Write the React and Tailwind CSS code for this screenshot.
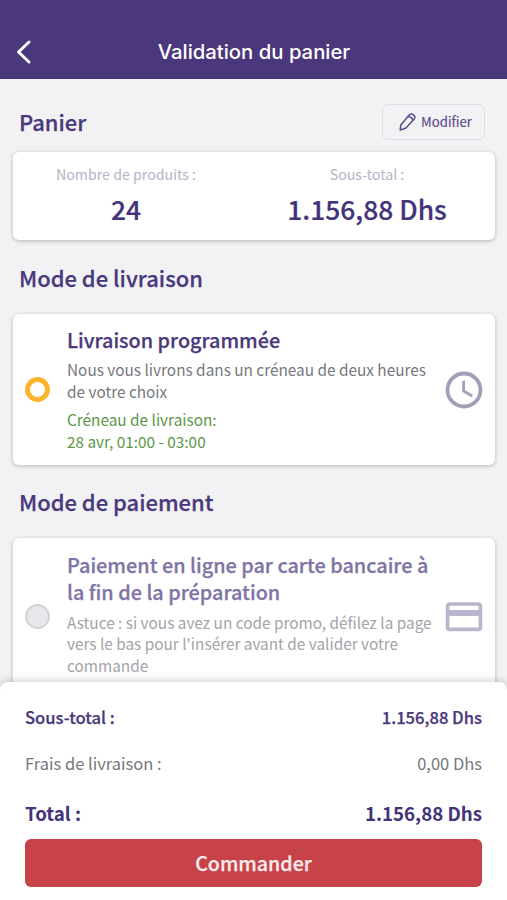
import clsx from 'clsx';

const ChevronIcon = () => (
  <svg width="18" height="26" viewBox="0 0 18 26" fill="none" stroke="currentColor" strokeWidth="3" strokeLinecap="round" strokeLinejoin="round">
    <path d="M14 3 3.5 13 14 23" />
  </svg>
);

const PencilIcon = () => (
  <svg width="18" height="20" viewBox="0 0 18 20" fill="none" stroke="currentColor" strokeWidth="1.5" strokeLinecap="round" strokeLinejoin="round">
    <path d="M1.2 18 1.8 12.9 10.2 2.9a2.6 2.6 0 0 1 3.7-.4l1 .8a2.6 2.6 0 0 1 .4 3.7L6.9 16z" />
    <path d="M9 4.4c2.4.2 4.4 1.8 5 4" />
  </svg>
);

const ClockIcon = () => (
  <svg width="38" height="38" viewBox="0 0 38 38" fill="none" stroke="currentColor" strokeWidth="3.8">
    <circle cx="19" cy="19" r="16.5" />
    <path d="M18.6 9.8V20l8.6 5" strokeWidth="2.8" />
  </svg>
);

const CardIcon = () => (
  <svg width="38" height="30" viewBox="0 0 38 30" fill="none" stroke="currentColor" strokeWidth="3.7">
    <rect x="2.6" y="2" width="32.8" height="25.4" rx="2" />
    <path d="M2 11h34" strokeWidth="6.2" />
  </svg>
);

function SectionTitle({ children }) {
  return <h2 className="text-[21.95px] leading-8 font-medium text-[#4a387c] [-webkit-text-stroke:0.25px]">{children}</h2>;
}

function Card({ className, children }) {
  return (
    <div className={clsx('rounded-md bg-white shadow-[0_1px_4px_rgba(0,0,0,0.25)]', className)}>
      {children}
    </div>
  );
}

function Stat({ label, value }) {
  return (
    <div className="flex flex-col items-center">
      <span className="text-[14.2px] leading-5 text-[#b5b3c6]">{label}</span>
      <span className="mt-[7px] text-[26.4px] leading-9 font-medium text-[#433379] [-webkit-text-stroke:0.2px]">{value}</span>
    </div>
  );
}

function SummaryRow({ label, value, className }) {
  return (
    <div className={clsx('flex items-center justify-between', className)}>
      <span>{label}</span>
      <span>{value}</span>
    </div>
  );
}

export default function App() {
  return (
    <div className="flex h-[900px] w-[507px] flex-col overflow-hidden bg-[#f2f2f5] font-['Noto_Sans_CJK_SC',sans-serif]">
      <header className="grid h-[79px] shrink-0 grid-cols-[60px_1fr_59px] items-end bg-[#4b377c] pb-[13px] text-white">
        <button className="pb-px pl-[15px]" aria-label="Retour">
          <ChevronIcon />
        </button>
        <h1 className="text-center font-['Inter',sans-serif] text-[20.3px] leading-7 font-medium">Validation du panier</h1>
      </header>

      <main className="h-[603px] shrink-0 overflow-hidden pr-3 pl-[13px]">
        <div className="mt-[25px] flex h-9 items-center justify-between pr-2.5 pl-1.5">
          <div className="pb-px">
            <SectionTitle>Panier</SectionTitle>
          </div>
          <button className="flex h-9 w-[103px] items-center gap-1 rounded-md border border-[#dddde3] pl-4 text-[13.2px] text-[#5b4a8c] [-webkit-text-stroke:0.15px]">
            <PencilIcon />
            Modifier
          </button>
        </div>
        <Card className="mt-3 grid h-[88px] grid-cols-[226px_256px] pt-3">
          <Stat label="Nombre de produits :" value="24" />
          <Stat label="Sous-total :" value="1.156,88 Dhs" />
        </Card>

        <div className="mt-[22px] pl-1.5">
          <SectionTitle>Mode de livraison</SectionTitle>
        </div>
        <Card className="mt-5 flex h-[151px] items-center px-3">
          <span className="size-[25px] shrink-0 rounded-full border-[5px] border-[#fbb42c]" />
          <div className="ml-[17px] flex-1 whitespace-nowrap">
            <h3 className="-mt-px text-[19.8px] leading-7 font-medium text-[#4a387c] [-webkit-text-stroke:0.25px]">Livraison programmée</h3>
            <p className="mt-[5px] text-[15.35px] leading-[21.5px] text-[#77777d]">
              Nous vous livrons dans un créneau de deux heures<br />de votre choix
            </p>
            <p className="mt-[7px] text-[15.35px] leading-[21.5px] text-[#5c9647]">
              Créneau de livraison:<br />28 avr, 01:00 - 03:00
            </p>
          </div>
          <span className="text-[#a29fbb]"><ClockIcon /></span>
        </Card>

        <div className="mt-[21px] pl-1.5">
          <SectionTitle>Mode de paiement</SectionTitle>
        </div>
        <Card className="mt-5 flex h-[157px] items-center px-3">
          <span className="size-[25px] shrink-0 rounded-full border-2 border-[#d2d4d8] bg-[#e6e8eb]" />
          <div className="-mt-1.5 ml-[17px] flex-1 whitespace-nowrap">
            <h3 className="text-[19.85px] leading-[27px] font-medium text-[#8073a5] [-webkit-text-stroke:0.25px]">
              Paiement en ligne par carte bancaire à<br />la fin de la préparation
            </h3>
            <p className="mt-[7px] text-[15.35px] leading-[21.5px] text-[#a3a3a8]">
              Astuce : si vous avez un code promo, défilez la page<br />vers le bas pour l'insérer avant de valider votre<br />commande
            </p>
          </div>
          <span className="text-[#b9b5cc]"><CardIcon /></span>
        </Card>
      </main>

      <footer className="relative h-[218px] shrink-0 rounded-t-lg bg-white px-[25px] pt-[19px] shadow-[0_-1px_8px_rgba(0,0,0,0.2)]">
        <SummaryRow label="Sous-total :" value="1.156,88 Dhs" className="h-8 text-[16.6px] font-medium text-[#4a387c] [-webkit-text-stroke:0.25px]" />
        <SummaryRow label="Frais de livraison :" value="0,00 Dhs" className="mt-3.5 h-8 text-[16.5px] text-[#77777d]" />
        <SummaryRow label="Total :" value="1.156,88 Dhs" className="mt-[18px] h-8 text-[18.7px] font-bold text-[#433379]" />
        <button className="mt-2.5 flex h-12 w-full items-center justify-center rounded-md bg-[#c84249] text-[19.6px] font-medium text-[#fbecec] [-webkit-text-stroke:0.25px]">
          Commander
        </button>
      </footer>
    </div>
  );
}
